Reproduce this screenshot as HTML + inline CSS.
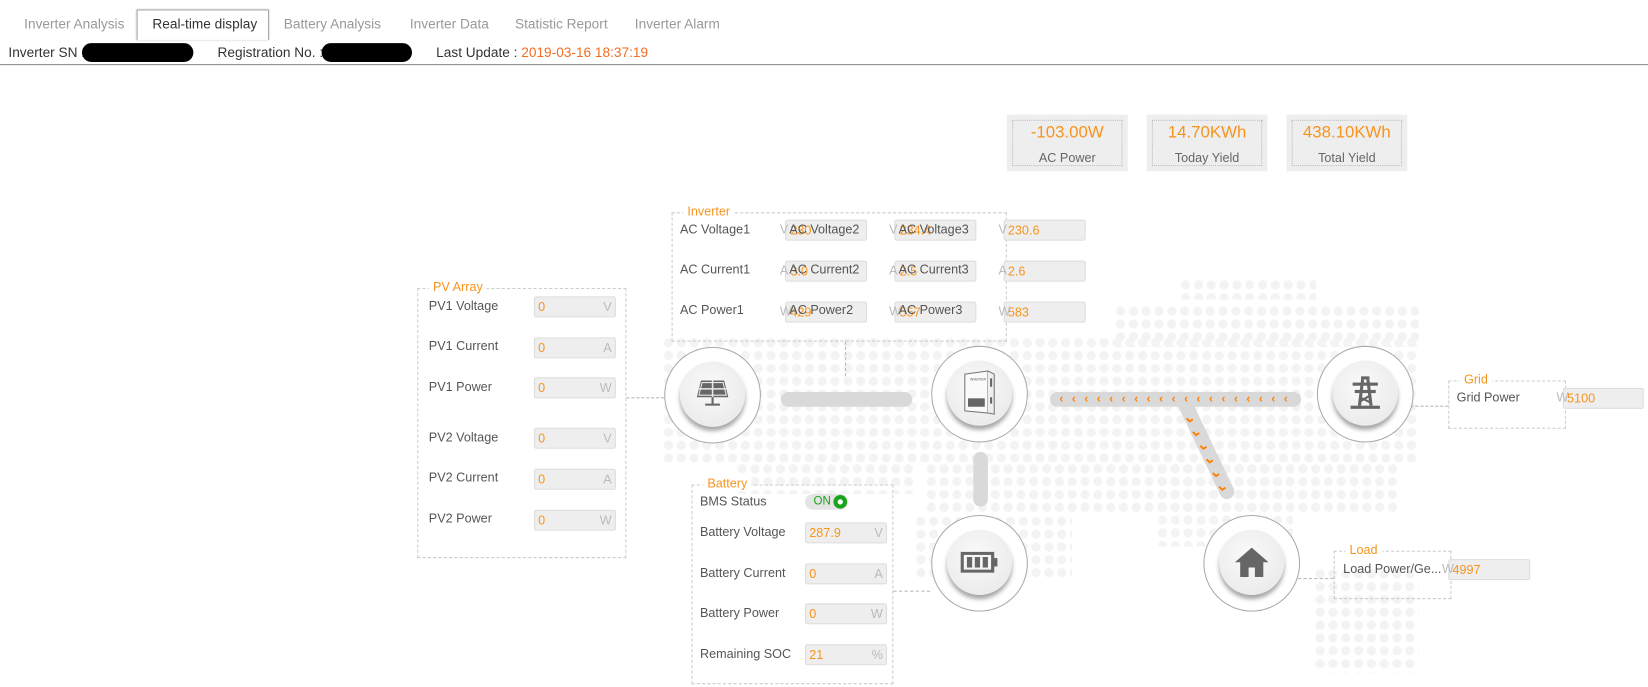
<!DOCTYPE html>
<html><head><meta charset="utf-8">
<style>
*{margin:0;padding:0;box-sizing:border-box}
body{width:1648px;height:687px;background:#fff;font-family:"Liberation Sans",sans-serif;font-size:12px;color:#555;position:relative;overflow:hidden}
#w{position:absolute;left:0;top:0;width:1568px;height:654px;transform:scale(1.051);transform-origin:0 0}
.a{position:absolute}
.tab{position:absolute;top:15px;color:#999;font-size:13px}
.dots{position:absolute;background-image:radial-gradient(circle,#f3f3f3 4px,transparent 4.6px);background-size:12.2px 12.2px}
.box{position:absolute;border:1px dashed #ccc}
.lg{position:absolute;top:-9px;left:10px;background:#fff;padding:0 4px;color:#f7941d;font-size:12px}
.lb{position:absolute;color:#555;font-size:12px}
.in{position:absolute;width:78px;height:20px;background:#eee;border:1px solid #ddd;border-radius:2px;color:#f7941d;font-size:12px;line-height:18px;padding-left:3px}
.in i{position:absolute;right:3px;top:0;color:#bbb;font-style:normal}
.u{position:absolute;color:#bbb;font-size:12px}
.o{position:absolute;color:#f7941d;font-size:12px}
.circ{position:absolute;width:92px;height:92px;border:1.5px solid #aaa;border-radius:50%;background:#fff}
.circ .c{position:absolute;left:14px;top:13px;width:62px;height:62px;border-radius:50%;background:radial-gradient(circle at 45% 40%,#fafafa,#e6e6e6);box-shadow:0 4px 4px rgba(0,0,0,.35);display:flex;align-items:center;justify-content:center}
.bar{position:absolute;background:#d9d9d9;border-radius:8px}
.kpi{position:absolute;top:109px;width:115px;height:54px;background:#eee}
.kpi div{position:absolute;left:5px;top:5px;right:5px;bottom:5px;border:1px dotted #bbb;text-align:center}
.kpi b{display:block;font-weight:normal;color:#f7941d;font-size:16px;margin-top:3px}
.kpi span{display:block;color:#666;font-size:12px;margin-top:7px}
.dl{position:absolute;border-top:1px dashed #bbb}
.dv{position:absolute;border-left:1px dashed #bbb}
</style></head><body><div id="w">
<div class="tab" style="left:23px">Inverter Analysis</div>
<div class="a" style="left:130px;top:9px;width:126px;height:29px;border:1px solid #aaa;border-bottom:none;box-shadow:0 0 2px #aaa;background:#fff"></div>
<div class="tab" style="left:145px;color:#333">Real-time display</div>
<div class="tab" style="left:270px">Battery Analysis</div>
<div class="tab" style="left:390px">Inverter Data</div>
<div class="tab" style="left:490px">Statistic Report</div>
<div class="tab" style="left:604px">Inverter Alarm</div>
<div class="a" style="left:8px;top:42px;font-size:13px;color:#333">Inverter SN :</div>
<div class="a" style="left:78px;top:41px;width:106px;height:18px;background:#000;border-radius:9px"></div>
<div class="a" style="left:207px;top:42px;font-size:13px;color:#333">Registration No. :</div>
<div class="a" style="left:306px;top:41px;width:86px;height:18px;background:#000;border-radius:9px"></div>
<div class="a" style="left:415px;top:42px;font-size:13px;color:#333">Last Update : <span style="color:#f26d21">2019-03-16 18:37:19</span></div>
<div class="a" style="left:0;top:61px;width:1568px;height:1px;background:#888"></div>

<!-- dots map -->
<div class="dots" style="left:1122px;top:265px;width:130px;height:20px"></div>
<div class="dots" style="left:1060px;top:290px;width:290px;height:40px"></div>
<div class="dots" style="left:630px;top:320px;width:720px;height:120px"></div>
<div class="dots" style="left:880px;top:440px;width:450px;height:50px"></div>
<div class="dots" style="left:870px;top:490px;width:150px;height:60px"></div>
<div class="dots" style="left:1100px;top:440px;width:130px;height:80px"></div>
<div class="dots" style="left:1250px;top:540px;width:100px;height:100px"></div>
<div class="dots" style="left:700px;top:440px;width:170px;height:30px"></div>

<!-- KPIs -->
<div class="kpi" style="left:958px"><div><b>-103.00W</b><span>AC Power</span></div></div>
<div class="kpi" style="left:1091px"><div><b>14.70KWh</b><span>Today Yield</span></div></div>
<div class="kpi" style="left:1224px"><div><b>438.10KWh</b><span>Total Yield</span></div></div>

<!-- Inverter box -->
<div class="box" style="left:639px;top:202px;width:319px;height:123px"><div class="lg">Inverter</div></div>
<div class="lb" style="left:647px;top:211px">AC Voltage1</div>
<div class="lb" style="left:647px;top:249px">AC Current1</div>
<div class="lb" style="left:647px;top:288px">AC Power1</div>
<div class="in" style="left:747px;top:209px"></div><div class="in" style="left:851px;top:209px"></div><div class="in" style="left:955px;top:209px">230.6</div>
<div class="in" style="left:747px;top:248px"></div><div class="in" style="left:851px;top:248px"></div><div class="in" style="left:955px;top:248px">2.6</div>
<div class="in" style="left:747px;top:287px"></div><div class="in" style="left:851px;top:287px"></div><div class="in" style="left:955px;top:287px">583</div>
<div class="u" style="left:742px;top:211px">V</div><div class="o" style="left:752px;top:212px">230</div><div class="lb" style="left:751px;top:211px">AC Voltage2</div>
<div class="u" style="left:846px;top:211px">V</div><div class="o" style="left:856px;top:212px">234.4</div><div class="lb" style="left:855px;top:211px">AC Voltage3</div>
<div class="u" style="left:950px;top:211px">V</div>
<div class="u" style="left:742px;top:250px">A</div><div class="o" style="left:752px;top:251px">3.0</div><div class="lb" style="left:751px;top:249px">AC Current2</div>
<div class="u" style="left:846px;top:250px">A</div><div class="o" style="left:856px;top:251px">2.5</div><div class="lb" style="left:855px;top:249px">AC Current3</div>
<div class="u" style="left:950px;top:250px">A</div>
<div class="u" style="left:742px;top:289px">W</div><div class="o" style="left:752px;top:290px">429</div><div class="lb" style="left:751px;top:288px">AC Power2</div>
<div class="u" style="left:846px;top:289px">W</div><div class="o" style="left:856px;top:290px">557</div><div class="lb" style="left:855px;top:288px">AC Power3</div>
<div class="u" style="left:950px;top:289px">W</div>

<!-- PV box -->
<div class="box" style="left:397px;top:274px;width:199px;height:257px"><div class="lg">PV Array</div></div>
<div class="lb" style="left:408px;top:284px">PV1 Voltage</div><div class="in" style="left:508px;top:282px">0<i>V</i></div>
<div class="lb" style="left:408px;top:322px">PV1 Current</div><div class="in" style="left:508px;top:321px">0<i>A</i></div>
<div class="lb" style="left:408px;top:361px">PV1 Power</div><div class="in" style="left:508px;top:359px">0<i>W</i></div>
<div class="lb" style="left:408px;top:409px">PV2 Voltage</div><div class="in" style="left:508px;top:407px">0<i>V</i></div>
<div class="lb" style="left:408px;top:447px">PV2 Current</div><div class="in" style="left:508px;top:446px">0<i>A</i></div>
<div class="lb" style="left:408px;top:486px">PV2 Power</div><div class="in" style="left:508px;top:485px">0<i>W</i></div>

<!-- Battery box -->
<div class="box" style="left:658px;top:461px;width:192px;height:190px"><div class="lg">Battery</div></div>
<div class="lb" style="left:666px;top:470px">BMS Status</div>
<div class="a" style="left:766px;top:470px;width:41px;height:15px;border-radius:8px;background:#e4e4e4;color:#1aa31a;font-size:11px;line-height:15px;padding-left:8px">ON</div>
<div class="a" style="left:793px;top:471px;width:13px;height:13px;border-radius:50%;background:#19a519"><div style="position:absolute;left:4px;top:4px;width:5px;height:5px;border-radius:50%;background:#fff"></div></div>
<div class="lb" style="left:666px;top:499px">Battery Voltage</div><div class="in" style="left:766px;top:497px">287.9<i>V</i></div>
<div class="lb" style="left:666px;top:538px">Battery Current</div><div class="in" style="left:766px;top:536px">0<i>A</i></div>
<div class="lb" style="left:666px;top:576px">Battery Power</div><div class="in" style="left:766px;top:574px">0<i>W</i></div>
<div class="lb" style="left:666px;top:615px">Remaining SOC</div><div class="in" style="left:766px;top:613px">21<i>%</i></div>

<!-- Grid box -->
<div class="box" style="left:1378px;top:362px;width:112px;height:46px"><div class="lg">Grid</div></div>
<div class="lb" style="left:1386px;top:371px">Grid Power</div>
<div class="in" style="left:1487px;top:369px;width:77px">5100</div><div class="u" style="left:1481px;top:371px">W</div>
<!-- Load box -->
<div class="box" style="left:1269px;top:524px;width:112px;height:46px"><div class="lg">Load</div></div>
<div class="lb" style="left:1278px;top:534px">Load Power/Ge...</div>
<div class="in" style="left:1378px;top:532px;width:78px">4997</div><div class="u" style="left:1372px;top:534px">W</div>

<!-- connector dashed lines -->
<div class="dl" style="left:596px;top:378px;width:36px"></div>
<div class="dv" style="left:804px;top:325px;height:33px"></div>
<div class="dl" style="left:1342px;top:386px;width:36px"></div>
<div class="dl" style="left:1235px;top:550px;width:34px"></div>
<div class="dl" style="left:850px;top:562px;width:35px"></div>

<!-- bars -->
<div class="bar" style="left:743px;top:373px;width:125px;height:14px"></div>
<div class="bar" style="left:926px;top:430px;width:14px;height:52px"></div>
<div class="bar" style="left:999px;top:373px;width:239px;height:14px"></div>
<div class="bar" style="top:376px;width:14px;height:108px;transform-origin:7px 7px;left:1120px;transform:rotate(-25.5deg)"></div>
<div class="a" style="left:1008px;top:373px;color:#ff7f00;font-size:11px;font-weight:bold;letter-spacing:8.2px;line-height:14px;white-space:nowrap">‹‹‹‹‹‹‹‹‹‹‹‹‹‹‹‹‹‹‹</div>
<svg class="a" style="left:1120px;top:385px" width="60" height="95"><g fill="none" stroke="#ff7f00" stroke-width="1.8">
<path d="M9 13l3 3 3-2M15 26l3 3 3-2M22 39l3 3 3-2M28 52l3 3 3-2M34 65l3 3 3-2M40 78l3 3 3-2"/></g></svg>

<!-- circles -->
<div class="circ" style="left:632px;top:330px"><div class="c"><svg width="34" height="30" viewBox="0 0 34 30"><path d="M6 2h22l4 16H2z" fill="#666"/><path d="M17 2v16M4 10h26" stroke="#e8e8e8" stroke-width="1.5"/><path d="M7 4h20l3 12H4z" fill="none" stroke="#e8e8e8" stroke-width="1"/><path d="M17 18v6M10 25h14" stroke="#666" stroke-width="2"/></svg></div></div>
<div class="circ" style="left:886px;top:329px"><div class="c"><svg width="36" height="44" viewBox="0 0 36 44"><path d="M4 4l22-3v40L4 39z" fill="#fafafa" stroke="#777"/><path d="M26 1l6 3v38l-6-1" fill="#eee" stroke="#777"/><rect x="7" y="27" width="16" height="8" fill="#666"/><rect x="28" y="8" width="2" height="8" fill="#666"/><rect x="28" y="26" width="2" height="6" fill="#666"/><text x="9" y="10" font-size="3" fill="#555" font-family="Liberation Sans">INVERTER</text></svg></div></div>
<div class="circ" style="left:1253px;top:329px"><div class="c"><svg width="28" height="32" viewBox="0 0 28 32"><g fill="#666"><rect x="10" y="0" width="8" height="3"/><rect x="2" y="6" width="24" height="3"/><rect x="4" y="13" width="20" height="3"/><rect x="0" y="28" width="28" height="3"/><path d="M10 3h3l-3 25H7zM15 3h3l3 25h-3z"/></g><path d="M9 20l10 5M9 24l10-6" stroke="#666" stroke-width="2"/></svg></div></div>
<div class="circ" style="left:886px;top:490px"><div class="c"><svg width="36" height="20" viewBox="0 0 36 20"><rect x="1.5" y="1.5" width="29" height="17" fill="none" stroke="#666" stroke-width="3"/><rect x="31" y="6" width="4" height="8" fill="#666"/><rect x="6" y="5" width="5" height="10" fill="#666"/><rect x="13.5" y="5" width="5" height="10" fill="#666"/><rect x="21" y="5" width="5" height="10" fill="#666"/></svg></div></div>
<div class="circ" style="left:1145px;top:490px"><div class="c"><svg width="34" height="30" viewBox="0 0 34 30"><path d="M17 1L1 15h5v14h8v-9h6v9h8V15h5z" fill="#666"/></svg></div></div>
</div></body></html>
